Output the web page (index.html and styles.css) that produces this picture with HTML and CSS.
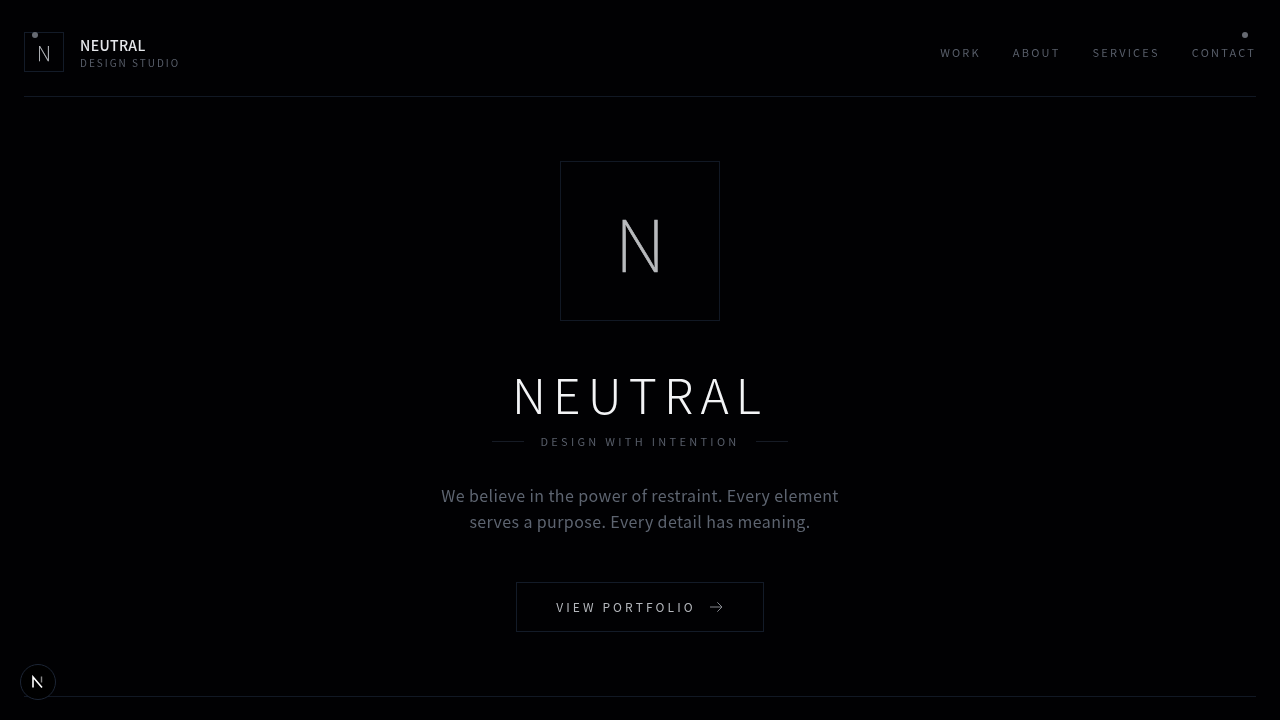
FILE: index.html
```html
<!DOCTYPE html>
<html lang="en">
<head>
  <meta charset="UTF-8">
  <meta name="viewport" content="width=device-width, initial-scale=1.0">
  <title>Neutral</title>
  <link rel="stylesheet" href="styles.css">
</head>
<body>
  <div class="page">
    <header class="site-header">
      <span class="dot dot-left"></span>
      <span class="dot dot-right"></span>
      <div class="brand">
        <div class="brand-mark">N</div>
        <div class="brand-text">
          <div class="brand-name">NEUTRAL</div>
          <div class="brand-sub">DESIGN STUDIO</div>
        </div>
      </div>
      <nav class="nav">
        <a href="#">WORK</a>
        <a href="#">ABOUT</a>
        <a href="#">SERVICES</a>
        <a href="#">CONTACT</a>
      </nav>
    </header>

    <main class="hero">
      <div class="hero-mark">N</div>
      <h1 class="hero-title">NEUTRAL</h1>
      <div class="tagline">
        <span class="tagline-rule"></span>
        <span class="tagline-text">DESIGN WITH INTENTION</span>
        <span class="tagline-rule"></span>
      </div>
      <p class="hero-copy">We believe in the power of restraint. Every element<br>serves a purpose. Every detail has meaning.</p>
      <a class="cta" href="#">
        <span class="cta-label">VIEW PORTFOLIO</span>
        <svg class="cta-arrow" width="16" height="16" viewBox="0 0 24 24" fill="none" stroke="currentColor" stroke-width="1.5">
          <path d="M3 12h18M14 5l7 7-7 7"/>
        </svg>
      </a>
    </main>

    <footer class="site-footer"></footer>
  </div>

  <div class="dev-badge">
    <svg width="14" height="14" viewBox="0 0 14 14" fill="none">
      <path d="M2 12.5V2L11 12.5" stroke="#fff" stroke-width="1.6"/>
      <path d="M10.5 1.5v6" stroke="#888" stroke-width="1.4"/>
    </svg>
  </div>
</body>
</html>
```

FILE: styles.css
```css
* {
  box-sizing: border-box;
}

html,
body {
  height: 100%;
  margin: 0;
}

body {
  background-color: #010103;
  color: #fff;
  font-family: "Noto Sans CJK JP", "Noto Sans", sans-serif;
  overflow: hidden;
}

a {
  color: inherit;
  text-decoration: none;
}

.page {
  height: 720px;
  padding: 0 24px;
  display: flex;
  flex-direction: column;
  will-change: opacity;
}

.site-header {
  position: relative;
  height: 97px;
  padding-top: 32px;
  display: flex;
  justify-content: space-between;
  align-items: flex-start;
  border-bottom: 1px solid #111824;
}

.dot {
  position: absolute;
  top: 32px;
  width: 6px;
  height: 6px;
  border-radius: 50%;
  background-color: #666a72;
}

.dot-left {
  left: 8px;
}

.dot-right {
  right: 8px;
}

.brand {
  display: flex;
  gap: 16px;
}

.brand-mark {
  width: 40px;
  height: 40px;
  padding-top: 2px;
  border: 1px solid #131b28;
  display: flex;
  align-items: center;
  justify-content: center;
  font-size: 20px;
  font-weight: 100;
  line-height: 1;
  color: #c4c7cc;
  -webkit-text-stroke: 0.25px #c4c7cc;
}

.brand-name {
  margin-top: 3px;
  font-size: 14px;
  line-height: 20px;
  letter-spacing: 0.35px;
  font-weight: 500;
  color: #e5e7eb;
}

.brand-sub {
  margin-top: 1px;
  font-size: 10px;
  line-height: 14px;
  letter-spacing: 2px;
  color: #585e6a;
}

.nav {
  display: flex;
  gap: 32px;
  height: 40px;
  align-items: center;
  font-size: 11px;
  letter-spacing: 2.2px;
  color: #585e6a;
}

.hero {
  flex: 1;
  padding-top: 64px;
  display: flex;
  flex-direction: column;
  align-items: center;
}

.hero-mark {
  width: 160px;
  height: 160px;
  border: 1px solid #111824;
  display: flex;
  align-items: center;
  justify-content: center;
  font-size: 72px;
  font-weight: 100;
  line-height: 1;
  color: #b8babd;
  -webkit-text-stroke: 0.7px #b8babd;
}

.hero-title {
  margin: 48px 0 0;
  font-size: 48px;
  line-height: 48px;
  font-weight: 300;
  letter-spacing: 7.2px;
  color: #f3f4f6;
}

.tagline {
  margin-top: 16px;
  display: flex;
  align-items: center;
  gap: 16px;
}

.tagline-rule {
  width: 32px;
  height: 1px;
  background-color: #161b25;
}

.tagline-text {
  font-size: 11px;
  line-height: 16px;
  letter-spacing: 3.3px;
  color: #585e6a;
}

.hero-copy {
  margin: 32px 0 0;
  padding-top: 1px;
  font-size: 16px;
  line-height: 26px;
  letter-spacing: 0.4px;
  text-align: center;
  color: #5d6470;
}

.cta {
  margin-top: 48px;
  width: 248px;
  height: 50px;
  border: 1px solid #131b28;
  display: flex;
  align-items: center;
  justify-content: center;
  gap: 12px;
  font-size: 12px;
  letter-spacing: 3.1px;
  color: #b4b7bc;
}

.cta-label {
  margin-bottom: 2px;
}

.cta-arrow {
  color: #85888e;
}

.site-footer {
  height: 24px;
  border-top: 1px solid #111824;
}

.dev-badge {
  position: absolute;
  left: 20px;
  bottom: 20px;
  width: 36px;
  height: 36px;
  border: 1px solid #1c2535;
  border-radius: 50%;
  background-color: #000;
  display: flex;
  align-items: center;
  justify-content: center;
}
```
